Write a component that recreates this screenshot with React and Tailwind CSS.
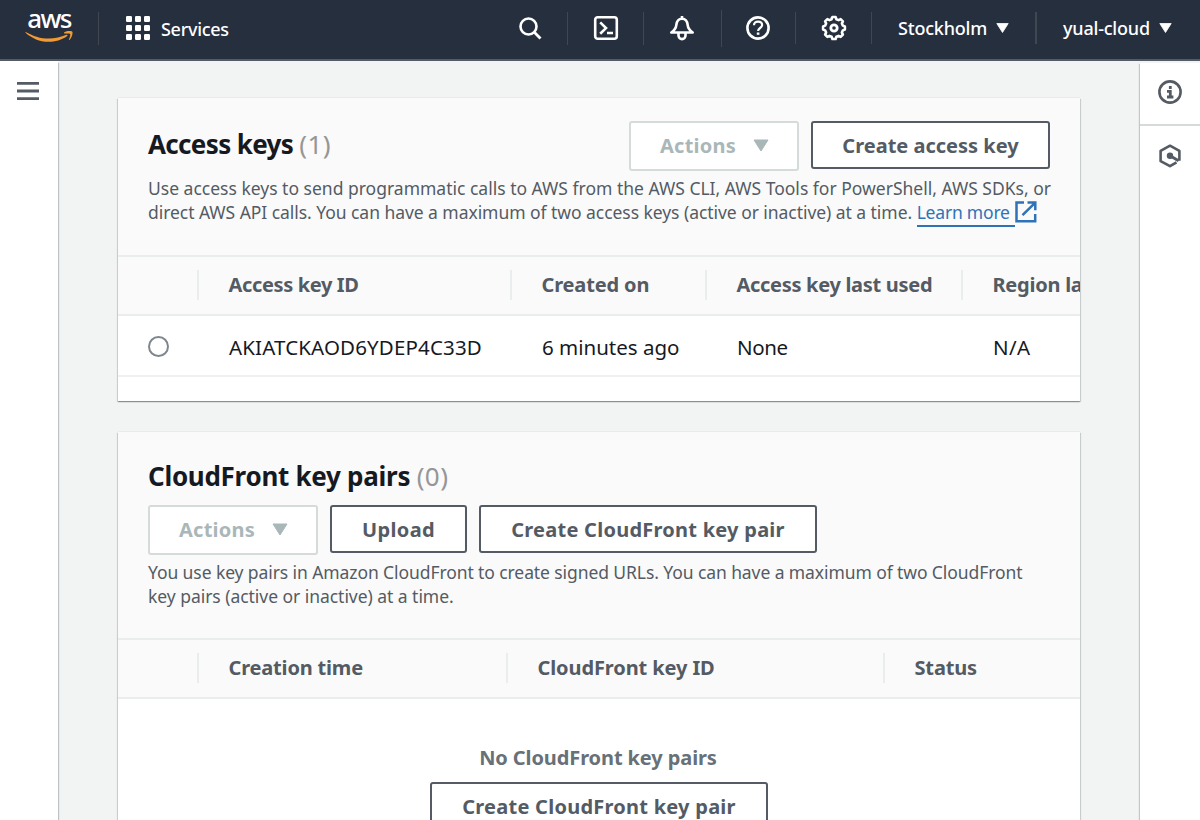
import React from 'react';

function AwsLogo() {
  return (
    <div className="flex w-[48px] shrink-0 flex-col items-center">
      <span className="h-[28px] text-[26px] leading-[36px] font-medium tracking-[-1.7px] text-white">aws</span>
      <svg className="mt-[3px] h-[12px] w-[48px]" viewBox="0 0 48 12" fill="#f29b34">
        <path d="M1.200 1.200C8 5 15 7.600 24 7.600c6 0 12-1.400 17.500-3.800.9-.35 1.500.6.7 1.200C37 9 30 10.800 23.500 10.800 14.500 10.800 7 7.300.8 2 .2 1.400.600.900 1.200 1.200z" />
        <path d="M39.300 1.300c2.500-1.600 7.400-1.400 8-.6.700.9-.2 6-2.700 8.100-.5.400-.9.200-.700-.3.700-1.700 1.800-4.800 1.200-5.600-.6-.7-3.600-.5-5.300-.3-.7.100-1-.8-.5-1.300z" />
      </svg>
    </div>
  );
}

function GridIcon() {
  return (
    <svg className="size-[24px]" viewBox="0 0 24 24" fill="#fff">
      {[0, 9, 18].map((y) => [0, 9, 18].map((x) => <rect key={`${x}-${y}`} x={x} y={y} width="6" height="6" rx="1.300" />))}
    </svg>
  );
}

function NavIcon({ children }) {
  return (
    <svg className="size-[26px] shrink-0" viewBox="0 0 26 26" fill="none" stroke="#fff" strokeWidth="2.600" strokeLinejoin="round">
      {children}
    </svg>
  );
}

function Caret({ className }) {
  return (
    <svg className={className} viewBox="0 0 16 13" fill="currentColor" stroke="currentColor" strokeLinejoin="round">
      <path d="M1 1h14L8 12z" />
    </svg>
  );
}

function NavDivider({ className = '' }) {
  return <div className={`w-px shrink-0 bg-[#414750] ${className}`} />;
}

function Nav() {
  return (
    <header className="flex h-[61px] shrink-0 border-b-2 border-[#545b64] bg-[#262f3e] font-medium text-white">
      <div className="flex w-[98px] pl-[25px]"><AwsLogo /></div>
      <NavDivider className="mt-3 h-[33px]" />
      <div className="flex w-[401px] pl-[27px]">
        <div className="pt-[16px]"><GridIcon /></div>
        <span className="pl-[11px] text-lg leading-[58px] tracking-[-0.3px]">Services</span>
      </div>
      <div className="flex w-[67px] justify-center pt-[15px] pr-[8px]">
        <NavIcon><circle cx="11.500" cy="11.500" r="8" /><path d="M17.300 17.300l6.200 6.200" strokeWidth="2.800" /></NavIcon>
      </div>
      <NavDivider className="mt-3 h-[33px]" />
      <div className="flex w-[75px] justify-center pt-[15px]">
        <NavIcon>
          <rect x="2.200" y="2.200" width="21.600" height="21.600" rx="2.500" />
          <path d="M7.200 7.400l5.800 5.700-5.800 5.700M14 18h6" strokeLinejoin="miter" />
        </NavIcon>
      </div>
      <NavDivider className="mt-3 h-[33px]" />
      <div className="flex w-[77px] justify-center pt-[15px] pr-[2px]">
        <NavIcon>
          <path d="M13 1v3M2.300 17.500h21.400c-3.200-2.200-4.700-4-5-7.300C18.300 6 16.300 3.700 13 3.700S7.700 6 7.300 10.200c-.3 3.300-1.800 5.100-5 7.300z" />
          <path d="M9.500 18v2.600a3.500 3.500 0 0 0 7 0V18" />
        </NavIcon>
      </div>
      <NavDivider className="mt-2.5 h-[37px]" />
      <div className="flex w-[73px] justify-center pt-[15px] pr-[2px]">
        <NavIcon>
          <circle cx="13" cy="13" r="10.600" />
          <path d="M9 10.300c0-2.400 1.600-3.700 4-3.700s4.100 1.300 4.100 3.400c0 3-4 3-4 6" strokeWidth="2.200" />
          <path d="M13.100 17.500v2.300" />
        </NavIcon>
      </div>
      <NavDivider className="mt-3 h-[32px]" />
      <div className="flex w-[75px] justify-center pt-[15px]">
        <NavIcon>
          <path d="M10.800 3.200L11.400 2h3.200l.8 2.200 2.200.9 2-1 2.300 2.300-1 2 .9 2.200 2.100.8v3.200l-2.100.8-.9 2.200 1 2-2.300 2.300-2-1-2.200.9-.8 2.200h-3.200l-.8-2.200-2.200-.9-2 1-2.300-2.300 1-2-.9-2.200L2.100 14.600v-3.200l2.100-.8.9-2.200-1-2 2.300-2.300 2 1 2.200-.9z" />
          <circle cx="13" cy="13" r="3.200" strokeWidth="2.800" />
        </NavIcon>
      </div>
      <NavDivider className="mt-3 h-[32px]" />
      <button className="flex w-[163px] pl-[26px] text-lg leading-[57px] tracking-[-0.2px]">
        Stockholm<Caret className="mt-[22px] ml-[9px] h-[12px] w-[13px]" />
      </button>
      <div className="mt-3 h-[32px] w-[2px] bg-[#3f4753]" />
      <button className="flex pl-[26px] text-lg leading-[57px] tracking-[-0.2px]">
        yual-cloud<Caret className="mt-[22px] ml-[9px] h-[12px] w-[13px]" />
      </button>
    </header>
  );
}

function Button({ children, className = '' }) {
  return (
    <button className={`h-[48px] shrink-0 rounded-[3px] border-2 border-[#545b64] bg-white text-xl leading-[45px] font-bold whitespace-nowrap text-[#545b64] ${className}`}>
      {children}
    </button>
  );
}

function ActionsButton() {
  return (
    <button className="flex h-[50px] w-[170px] shrink-0 rounded-[3px] border-2 border-[#d5dbdb] bg-white pl-[29px] text-xl leading-[45px] font-bold tracking-[0.25px] text-[#aab7b8]">
      Actions<Caret className="mt-[16px] ml-[17px] h-[13px] w-[16px]" />
    </button>
  );
}

function ColumnHead({ children, className = '' }) {
  return (
    <div className={`relative h-[57px] shrink-0 pl-[31.5px] text-xl leading-[56px] font-bold whitespace-nowrap text-[#545b64] before:absolute before:top-[13px] before:left-0 before:h-[30px] before:w-[2px] before:bg-[#eaeded] ${className}`}>
      {children}
    </div>
  );
}

const CARD = 'shrink-0 overflow-hidden bg-white shadow-[0_1px_1px_0_rgba(0,28,36,0.28),1px_1px_1px_0_rgba(0,28,36,0.13),-1px_1px_1px_0_rgba(0,28,36,0.13),0_-1px_0_0_#e9ecec]';

function AccessKeys() {
  return (
    <section className={`h-[303px] ${CARD}`}>
      <div className="h-[159px] border-b-2 border-[#eaeded] bg-[#fafafa] pl-[30px]">
        <div className="flex h-[78px] pt-[23px] pr-[30px]">
          <h2 className="flex-1 pt-[5px] text-[26px] leading-[36px] font-bold tracking-[-0.65px] text-[#16191f]">
            Access keys <span className="font-normal tracking-[0.4px] text-[#969696]">(1)</span>
          </h2>
          <ActionsButton />
          <Button className="ml-[12px] w-[239px]">Create access key</Button>
        </div>
        <p className="text-[17.5px] leading-[24px] whitespace-nowrap text-[#545b64]">
          Use access keys to send programmatic calls to AWS from the AWS CLI, AWS Tools for PowerShell, AWS SDKs, or
          <br />
          <span className="tracking-[-0.05px]">direct AWS API calls. You can have a maximum of two access keys (active or inactive) at a time. </span>
          <a className="inline-block h-[27px] border-b-2 border-[#2e73b8] pr-[5px] align-top tracking-[-0.2px] text-[#2e73b8]">Learn more</a>
          <svg className="mt-px inline-block size-[22px] align-top" viewBox="0 0 22 22" fill="none" stroke="#2e73b8" strokeWidth="2.500">
            <path d="M9 1.500H1.500v18.700h18.700V13M12.500 1.500h7.800v7.800M20 1.800L7.500 14.200" />
          </svg>
        </p>
      </div>
      <div className="flex h-[59px] border-b-2 border-[#eaeded] bg-[#fafafa]">
        <div className="w-[79px] shrink-0" />
        <ColumnHead className="w-[313px] tracking-[-0.36px]">Access key ID</ColumnHead>
        <ColumnHead className="w-[195px] tracking-[-0.15px]">Created on</ColumnHead>
        <ColumnHead className="w-[256px] tracking-[-0.3px]">Access key last used</ColumnHead>
        <ColumnHead className="w-[250px] tracking-[-0.25px]">Region last used</ColumnHead>
      </div>
      <div className="flex h-[61px] border-b-2 border-[#eff1f1] text-[20.5px] leading-[62px] whitespace-nowrap text-[#16191f]">
        <div className="w-[111px] shrink-0 pt-[20px] pl-[30px]">
          <div className="size-[21px] rounded-full border-2 border-[#7e868e] bg-white" />
        </div>
        <div className="w-[313px] shrink-0 tracking-[0.15px]">AKIATCKAOD6YDEP4C33D</div>
        <div className="w-[195px] shrink-0">6 minutes ago</div>
        <div className="w-[256px] shrink-0 tracking-[-0.4px]">None</div>
        <div className="tracking-[0.4px]">N/A</div>
      </div>
    </section>
  );
}

function KeyPairs() {
  return (
    <section className={`mt-[31px] h-[500px] ${CARD}`}>
      <div className="h-[208px] border-b-2 border-[#eaeded] bg-[#fafafa] pl-[30px]">
        <h2 className="h-[73px] pt-[26px] text-[26px] leading-[36px] font-bold tracking-[-0.28px] text-[#16191f]">
          CloudFront key pairs <span className="font-normal tracking-[0.4px] text-[#969696]">(0)</span>
        </h2>
        <div className="flex h-[55px]">
          <ActionsButton />
          <Button className="ml-[12px] w-[137px] tracking-[0.35px]">Upload</Button>
          <Button className="ml-[12px] w-[338px] tracking-[0.25px]">Create CloudFront key pair</Button>
        </div>
        <p className="text-[17.5px] leading-[24px] tracking-[-0.09px] whitespace-nowrap text-[#545b64]">
          You use key pairs in Amazon CloudFront to create signed URLs. You can have a maximum of two CloudFront
          <br />
          <span className="tracking-[-0.04px]">key pairs (active or inactive) at a time.</span>
        </p>
      </div>
      <div className="flex h-[59px] border-b-2 border-[#eaeded] bg-[#fafafa]">
        <div className="w-[79px] shrink-0" />
        <ColumnHead className="w-[309px] tracking-[-0.18px]">Creation time</ColumnHead>
        <ColumnHead className="w-[377px] tracking-[-0.1px]">CloudFront key ID</ColumnHead>
        <ColumnHead className="tracking-[-0.15px]">Status</ColumnHead>
      </div>
      <div className="flex flex-col items-center pt-[44px]">
        <div className="h-[39px] pr-[2px] text-xl leading-[30px] font-bold tracking-[-0.1px] text-[#687078]">No CloudFront key pairs</div>
        <Button className="w-[338px] tracking-[0.25px]">Create CloudFront key pair</Button>
      </div>
    </section>
  );
}

export default function App() {
  return (
    <div className="flex h-[820px] w-[1200px] flex-col overflow-hidden bg-[#f2f3f3] font-['Noto_Sans',sans-serif]">
      <Nav />
      <div className="flex min-h-0 flex-1">
        <aside className="w-[58px] shrink-0 bg-white pt-[20px] pl-[17px] shadow-[1px_2px_1px_0_rgba(0,28,36,0.22)]">
          <svg className="h-[20px] w-[22px]" viewBox="0 0 22 20" fill="#545b64">
            <path d="M0 1h22v2.800H0zM0 8.600h22v2.800H0zM0 16.200h22V19H0z" />
          </svg>
        </aside>
        <main className="flex flex-1 flex-col overflow-hidden px-[60px] pt-[37px]">
          <AccessKeys />
          <KeyPairs />
        </main>
        <aside className="mt-[2px] w-[60px] shrink-0 bg-white shadow-[-1px_1px_1px_0_rgba(0,28,36,0.2)]">
          <div className="h-[63px] border-b-2 border-[#d5dbdb] pt-[17px] pl-[18px]">
            <svg className="size-[24px]" viewBox="0 0 24 24" fill="none" stroke="#545b64">
              <circle cx="12" cy="12" r="10.600" strokeWidth="2.600" />
              <path d="M12.300 6v3M9 11.300h3.300v5.500M9 17h6.400" strokeWidth="2.800" />
            </svg>
          </div>
          <div className="pt-[18px] pl-[18px]">
            <svg className="size-[24px]" viewBox="0 0 24 24" fill="none" stroke="#545b64" strokeWidth="2.600" strokeLinejoin="round">
              <path d="M18.500 18.300L12 22.200l-9.400-5.100V6.900L12 1.700l9.400 5.200v9.800" />
              <circle cx="12" cy="11.800" r="3.200" fill="#545b64" stroke="none" />
              <path d="M12 11.800l8.600 5" strokeWidth="3" />
            </svg>
          </div>
        </aside>
      </div>
    </div>
  );
}
